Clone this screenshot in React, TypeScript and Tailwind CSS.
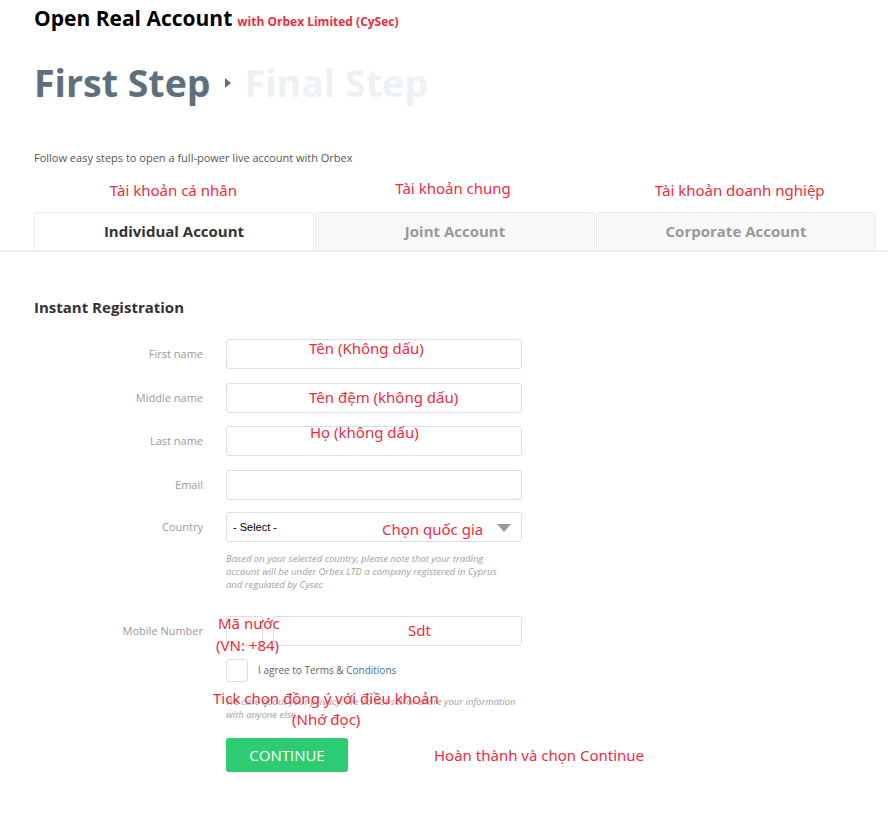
import React from "react";

const red = "text-[#ef2b3c]";

function Note({ className, children }: { className: string; children: React.ReactNode }) {
  return (
    <span
      className={`absolute whitespace-nowrap text-[15px] leading-[20px] ${red} ${className}`}
      style={{ fontFamily: '"Noto Sans", "Open Sans", sans-serif' }}
    >
      {children}
    </span>
  );
}

function Field({ label, top, children }: { label: string; top: string; children?: React.ReactNode }) {
  return (
    <div className={`flex items-center ${top}`}>
      <label className="w-[192px] pr-[23px] text-right text-[11px] text-[#9a9a9a]">{label}</label>
      <div className="relative h-[30px] w-[296px] rounded-[3px] border border-[#d9dee2] bg-white">{children}</div>
    </div>
  );
}

export default function App() {
  return (
    <div className="relative min-h-screen bg-white text-[#333]" style={{ fontFamily: '"Open Sans", "Noto Sans", sans-serif' }}>
      <div className="px-[34px] pt-[3px]">
        <h1 className="flex items-baseline gap-[5px]">
          <span className="text-[21px] font-bold text-black">Open Real Account</span>
          <span className="text-[12px] font-bold text-[#ef2b3c]">with Orbex Limited (CySec)</span>
        </h1>
        <div className="mt-[23px] flex items-center text-[37.5px] font-bold leading-[50px]">
          <span className="text-[#5e707d]">First Step</span>
          <span className="mx-[14px] h-0 w-0 border-y-[5px] border-l-[6px] border-y-transparent border-l-[#5e707d]" />
          <span className="text-[#eef1f4]">Final Step</span>
        </div>
        <p className="mt-[42px] text-[11px] text-[#555]">Follow easy steps to open a full-power live account with Orbex</p>
        <div className="mt-[12px] grid h-[24px] w-[842px] grid-cols-3 text-center text-[15px]" style={{ fontFamily: '"Noto Sans", sans-serif' }}>
          <span className={`${red} -ml-[2px] mt-[1px]`}>Tài khoản cá nhân</span>
          <span className={`${red} -mt-[1px] -ml-[4px]`}>Tài khoản chung</span>
          <span className={`${red} mt-[1px] ml-[8px]`}>Tài khoản doanh nghiệp</span>
        </div>
      </div>

      <div className="mt-[10px] border-b-2 border-[#eeeeee]">
        <div className="ml-[34px] grid w-[842px] grid-cols-3 gap-[1px]">
          <div className="flex h-[38px] items-center justify-center rounded-t-[4px] border border-b-0 border-[#ececec] bg-white text-[15px] font-bold text-[#333]">
            Individual Account
          </div>
          <div className="flex h-[38px] items-center justify-center rounded-t-[4px] border border-b-0 border-[#ececec] bg-[#f8f8f8] text-[15px] font-bold text-[#999]">
            Joint Account
          </div>
          <div className="flex h-[38px] items-center justify-center rounded-t-[4px] border border-b-0 border-[#ececec] bg-[#f8f8f8] text-[15px] font-bold text-[#999]">
            Corporate Account
          </div>
        </div>
      </div>

      <div className="px-[34px] pt-[45px]">
        <h2 className="text-[15px] font-bold leading-[20px] text-[#333]">Instant Registration</h2>

        <Field label="First name" top="mt-[22px]">
          <Note className="left-[82px] -top-[2px]">Tên (Không dấu)</Note>
        </Field>
        <Field label="Middle name" top="mt-[14px]">
          <Note className="left-[82px] top-[3px]">Tên đệm (không dấu)</Note>
        </Field>
        <Field label="Last name" top="mt-[13px]">
          <Note className="left-[83px] -top-[5px]">Họ (không dấu)</Note>
        </Field>
        <Field label="Email" top="mt-[14px]" />
        <Field label="Country" top="mt-[12px]">
          <span className="absolute left-[6px] top-[6px] text-[11px] text-black" style={{ fontFamily: '"Liberation Sans", sans-serif' }}>
            - Select -
          </span>
          <Note className="left-[155px] top-[6px]">Chọn quốc gia</Note>
          <span className="absolute right-[10px] top-[11px] h-0 w-0 border-x-[7px] border-t-[8px] border-x-transparent border-t-[#999]" />
        </Field>
        <p className="ml-[192px] mt-[10px] w-[284px] text-[9.5px] italic leading-[13px] text-[#a0a0a0]">
          Based on your selected country, please note that your trading account will be under Orbex LTD a company registered in Cyprus and regulated by Cysec
        </p>

        <div className="mt-[25px] flex items-center">
          <label className="w-[192px] pr-[23px] text-right text-[11px] text-[#9a9a9a]">Mobile Number</label>
          <div className="relative flex gap-[10px]">
            <div className="h-[30px] w-[37px] rounded-l-[3px] border border-[#d9dee2]" />
            <div className="relative h-[30px] w-[249px] rounded-[3px] border border-[#d9dee2]">
              <Note className="left-[134px] top-[3px]">Sdt</Note>
            </div>
            <Note className="-left-[8px] -top-[3px]">Mã nước</Note>
            <Note className="-left-[10px] top-[19px]">(VN: +84)</Note>
          </div>
        </div>

        <div className="ml-[192px] mt-[13px] flex items-center">
          <span className="h-[23px] w-[22px] rounded-[3px] border border-[#d9dee2]" />
          <span className="ml-[10px] text-[10px] text-[#5a6470]">
            I agree to Terms &amp; <span className="text-[#3b6e98]">Conditions</span>
          </span>
        </div>

        <div className="relative ml-[192px] mt-[13px] w-[300px]">
          <p className="text-[9.5px] italic leading-[13px] text-[#a0a0a0]">
            We care about your privacy. We do not sell or share your information with anyone else.
          </p>
          <Note className="-left-[13px] -top-[7px]">Tick chọn đồng ý với điều khoản</Note>
          <Note className="left-[66px] top-[14px]">(Nhớ đọc)</Note>
        </div>

        <div className="relative ml-[192px] mt-[17px] flex items-center">
          <button className="h-[34px] w-[122px] rounded-[3px] bg-[#2ecc71] text-[15px] text-white">CONTINUE</button>
          <Note className="left-[208px] top-[7px]">Hoàn thành và chọn Continue</Note>
        </div>
      </div>
    </div>
  );
}
